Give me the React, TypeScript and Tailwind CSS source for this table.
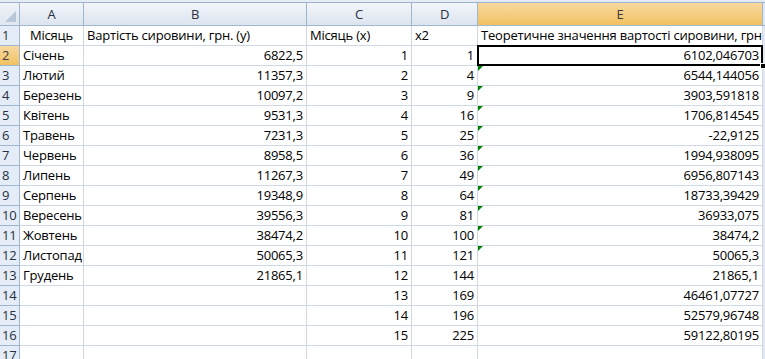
import React from 'react';

const months = ['Січень', 'Лютий', 'Березень', 'Квітень', 'Травень', 'Червень', 'Липень', 'Серпень', 'Вересень', 'Жовтень', 'Листопад', 'Грудень'];
const costs = ['6822,5', '11357,3', '10097,2', '9531,3', '7231,3', '8958,5', '11267,3', '19348,9', '39556,3', '38474,2', '50065,3', '21865,1'];
const theory = ['6102,046703', '6544,144056', '3903,591818', '1706,814545', '-22,9125', '1994,938095', '6956,807143', '18733,39429', '36933,075', '38474,2', '50065,3', '21865,1', '46461,07727', '52579,96748', '59122,80195'];

const cols = ['A', 'B', 'C', 'D', 'E'];

function Cell({ children, right, center, extra }: { children?: React.ReactNode; right?: boolean; center?: boolean; extra?: string }) {
  return (
    <div
      className={`relative h-[20px] border-r border-b border-[#d0d7e5] bg-white px-[3px] leading-[19px] whitespace-nowrap ${
        right ? 'text-right' : center ? 'text-center' : 'text-left'
      } ${extra ?? 'overflow-hidden'}`}
    >
      {children}
    </div>
  );
}

export default function App() {
  const rows = Array.from({ length: 17 }, (_, i) => i + 1);

  return (
    <div className="w-[765px] h-[359px] overflow-hidden bg-[#e3e9f1] text-[13px] tracking-[-0.2px] text-black" style={{ fontFamily: '"Open Sans", "Liberation Sans", sans-serif' }}>
      <div className="h-[3px] border-b border-[#9db3cc] bg-[#e6ecf4]" />
      <div className="grid grid-cols-[20px_64px_223px_105px_66px_285px_1fr]">
        {/* column headers */}
        <div className="relative h-[23px] border-r border-b border-[#9eb6ce] bg-gradient-to-b from-[#eef2f8] to-[#dfe6ef]">
          <div className="absolute right-[3px] bottom-[3px] w-0 h-0 border-l-[11px] border-l-transparent border-b-[11px] border-b-[#b8c7d8]" />
        </div>
        {cols.map((c) => (
          <div
            key={c}
            className={`h-[23px] border-r border-b border-[#9eb6ce] text-center leading-[22px] ${
              c === 'E' ? 'bg-gradient-to-b from-[#f9d99f] to-[#f1c15f] text-[#3b3b3b]' : 'bg-gradient-to-b from-[#f2f5fa] to-[#dde5ef] text-[#27313f]'
            }`}
          >
            {c}
          </div>
        ))}
        <div className="h-[23px] border-b border-[#9eb6ce] bg-[#e3e9f1]" />

        {rows.map((r) => {
          const idx = r - 2;
          const xi = r - 1;
          const hasX = r >= 2 && r <= 16;
          return (
            <React.Fragment key={r}>
              <div
                className={`h-[20px] border-r border-b border-[#9eb6ce] pl-[2px] leading-[19px] ${
                  r === 2 ? 'bg-gradient-to-b from-[#f9d99f] to-[#f1c15f] text-[#3b3b3b]' : 'bg-[#e4ecf7] text-[#27313f]'
                }`}
              >
                {r}
              </div>
              {r === 1 ? (
                <>
                  <Cell center>Місяць</Cell>
                  <Cell>Вартість сировини, грн. (у)</Cell>
                  <Cell>Місяць (х)</Cell>
                  <Cell>x2</Cell>
                  <Cell>Теоретичне значення вартості сировини, грн</Cell>
                </>
              ) : (
                <>
                  <Cell>{months[idx]}</Cell>
                  <Cell right>{costs[idx]}</Cell>
                  <Cell right>{hasX ? xi : ''}</Cell>
                  <Cell right>{hasX ? xi * xi : ''}</Cell>
                  <Cell right extra="overflow-visible">
                    {r >= 3 && r <= 12 && (
                      <span className="absolute left-0 top-0 w-0 h-0 border-t-[5px] border-t-[#008000] border-r-[5px] border-r-transparent" />
                    )}
                    {r === 2 && (
                      <>
                        <span className="pointer-events-none absolute left-[-1px] top-[-1px] right-[-1px] bottom-[-1px] border-2 border-black" />
                        <span className="absolute right-[-4px] bottom-[-4px] w-[6px] h-[6px] bg-black border border-white z-10" />
                      </>
                    )}
                    <span className="relative">{hasX ? theory[idx] : ''}</span>
                  </Cell>
                </>
              )}
              <div className="h-[20px] bg-[#e3e9f1]" />
            </React.Fragment>
          );
        })}
      </div>
    </div>
  );
}
